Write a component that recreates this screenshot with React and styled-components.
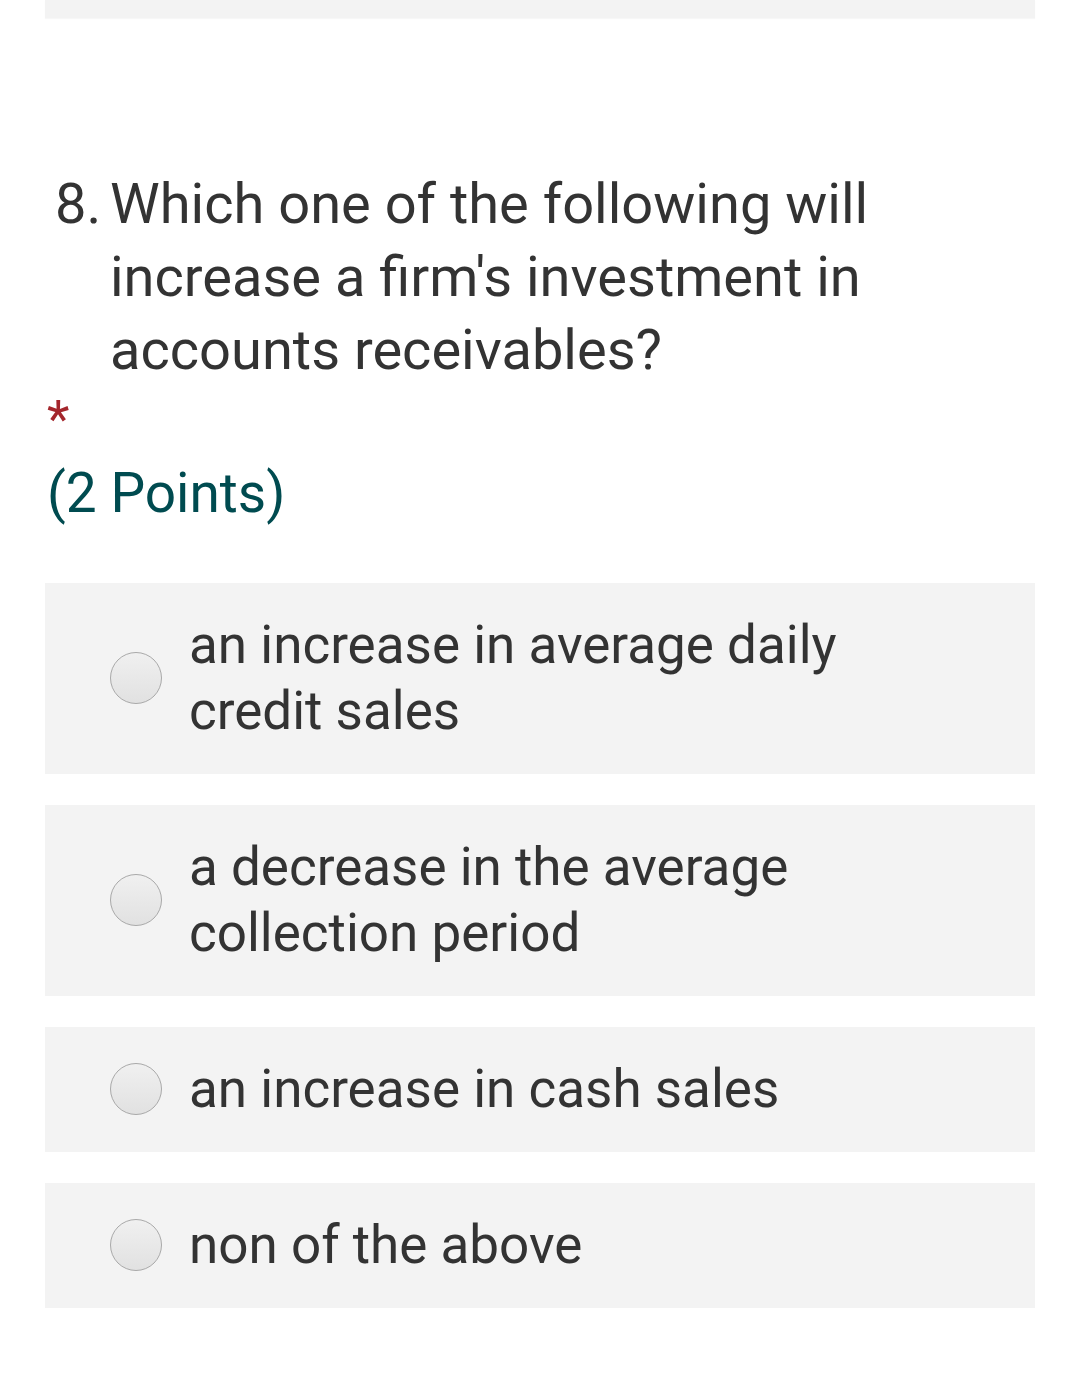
import React from 'react';
import styled, { createGlobalStyle } from 'styled-components';

const GlobalStyle = createGlobalStyle`
    body {
        margin: 0;
        background: #ffffff;
        font-family: Roboto, "Noto Sans", sans-serif;
        color: #333333;
    }
`;

const Page = styled.div`
    width: 1080px;
    padding: 0 45px;
    box-sizing: border-box;
`;

const PrevBlock = styled.div`
    height: 18px;
    background: #f3f3f3;
    box-shadow: 0 1px 1px rgba(0, 0, 0, 0.03);
`;

const Question = styled.div`
    display: flex;
    margin-top: 150px;
    padding-left: 10px;
    font-size: 56px;
    line-height: 73px;
    color: #333333;
`;

const Number = styled.span`
    flex: 0 0 55px;
`;

const QuestionText = styled.div`
    flex: 1;
    padding-right: 120px;
`;

const Required = styled.div`
    margin-top: 8px;
    padding-left: 2px;
    font-size: 52px;
    line-height: 50px;
    color: #a4262c;
`;

const Points = styled.div`
    margin-top: 15px;
    padding-left: 2px;
    font-size: 55px;
    line-height: 66px;
    color: #004b50;
`;

const Options = styled.div`
    display: flex;
    flex-direction: column;
    gap: 31px;
    margin-top: 57px;
`;

const Option = styled.label`
    display: flex;
    align-items: center;
    padding: 29px 0 30px 65px;
    background: #f3f3f3;
`;

const Radio = styled.span`
    flex: 0 0 50px;
    height: 50px;
    border-radius: 50%;
    border: 1px solid #a9a9a9;
    background: linear-gradient(#f0f0f0, #e1e1e1);
    margin-right: 27px;
`;

const OptionText = styled.span`
    font-size: 53px;
    line-height: 66px;
    color: #333333;
    padding-right: 180px;
`;

const choices = [
    'an increase in average daily credit sales',
    'a decrease in the average collection period',
    'an increase in cash sales',
    'non of the above',
];

const App = () => {
    return (
        <Page>
            <GlobalStyle />
            <PrevBlock />
            <Question>
                <Number>8.</Number>
                <QuestionText>
                    Which one of the following will increase a firm's investment in accounts receivables?
                </QuestionText>
            </Question>
            <Required>*</Required>
            <Points>(2 Points)</Points>
            <Options>
                {choices.map((c) => (
                    <Option key={c}>
                        <Radio />
                        <OptionText>{c}</OptionText>
                    </Option>
                ))}
            </Options>
        </Page>
    );
};

export default App;
